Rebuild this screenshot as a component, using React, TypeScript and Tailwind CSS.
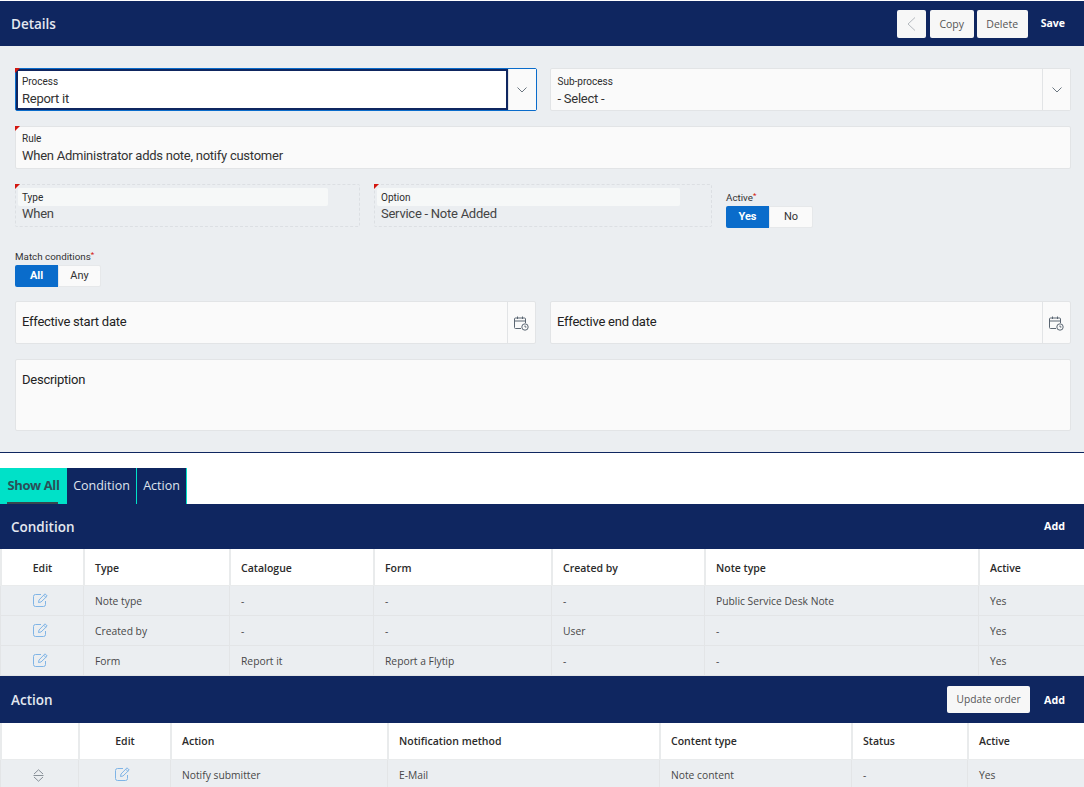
import React from "react";

const navy = "bg-[#0f2660]";

function Corner() {
  return <span className="absolute -left-px -top-px h-0 w-0 border-t-[5px] border-r-[5px] border-t-[#d3160f] border-r-transparent" />;
}

function Chevron() {
  return (
    <svg width="10" height="6" viewBox="0 0 10 6" fill="none" stroke="#6b7680" strokeWidth="1">
      <path d="M0.5 0.5 L5 5 L9.5 0.5" />
    </svg>
  );
}

function CalendarClock() {
  return (
    <svg width="15" height="15" viewBox="0 0 15 15" fill="none" stroke="#5b6672" strokeWidth="1">
      <path d="M7 12.5H1.5a1 1 0 0 1-1-1V3a1 1 0 0 1 1-1h9a1 1 0 0 1 1 1v4" />
      <path d="M0.5 5H11.5M3.5 0.5V3M8.5 0.5V3" />
      <circle cx="11" cy="11" r="3.2" />
      <path d="M11 9.5V11H12.4" />
    </svg>
  );
}

function EditIcon() {
  return (
    <svg className="-ml-[5px] -mt-[3px]" width="15" height="14" viewBox="0 0 15 14" fill="none" stroke="#7fb4e6" strokeWidth="1">
      <path d="M12.5 8v3.5a2 2 0 0 1-2 2H2.5a2 2 0 0 1-2-2V3.5a2 2 0 0 1 2-2H8" />
      <path d="M5.5 9.5 L6 7 L12 0.8 L14.2 3 L8 9 Z" />
      <path d="M10.7 2.2 L12.8 4.3" />
    </svg>
  );
}

function SortIcon() {
  return (
    <svg className="-ml-[4px] -mt-[1px]" width="11" height="13" viewBox="0 0 11 13" fill="none" stroke="#7d858d" strokeWidth="0.9">
      <path d="M1 5 L5.5 0.8 L10 5" />
      <path d="M0.5 6.5H10.5" />
      <path d="M1 8 L5.5 12.2 L10 8" />
    </svg>
  );
}

const bigText = "text-[13px] tracking-[-0.25px]";

function SelectField({ label, value, focused }: { label: string; value: string; focused?: boolean }) {
  return (
    <div className={`relative flex h-[43px] flex-1 rounded-[2px] border bg-[#fafafa] ${focused ? "border-[#0a6ccb]" : "border-[#e2e4e6]"}`}>
      <div className={`flex min-w-0 flex-1 flex-col ${focused ? "border-2 border-[#0f2660] bg-white pt-[4px] pl-[4px]" : "pl-[7px] pt-[6px]"}`}>
        <span className="text-[10px] leading-[14px] text-[#2c2c2c]">{label}</span>
        <span className={`${bigText} leading-[20px] text-[#333]`}>{value}</span>
      </div>
      <div className="flex w-[28px] shrink-0 items-center justify-center border-l border-[#e2e4e6] bg-[#fafafa]">
        <Chevron />
      </div>
      {focused && <Corner />}
    </div>
  );
}

function ReadOnlyField({ label, value, w, labelW }: { label: string; value: string; w: string; labelW: string }) {
  return (
    <div className={`relative h-[43px] ${w} rounded-[2px] border border-dashed border-[#dcdfe3]`}>
      <Corner />
      <div className={`mt-[3px] ml-[2px] h-[18px] ${labelW} rounded-[2px] bg-[#f6f8f8] pl-[4px] text-[10px] leading-[19px] text-[#2c2c2c]`}>{label}</div>
      <div className={`pl-[6px] ${bigText} leading-[16px] text-[#444]`}>{value}</div>
    </div>
  );
}

function Toggle({ a, b, wa, wb }: { a: string; b: string; wa: string; wb: string }) {
  return (
    <div className="flex h-[22px]">
      <div className={`flex ${wa} items-center justify-center rounded-l-[2px] bg-[#0a6ccb] text-[11px] font-bold text-white`}>{a}</div>
      <div className={`flex ${wb} items-center justify-center rounded-r-[2px] border border-[#e6e8ea] bg-[#fafafa] text-[11px] text-[#333]`}>{b}</div>
    </div>
  );
}

function DateField({ label }: { label: string }) {
  return (
    <div className="flex h-[43px] flex-1 rounded-[2px] border border-[#e2e4e6] bg-[#fafafa]">
      <div className={`flex flex-1 items-center pb-[1px] pl-[6px] ${bigText} text-[#222]`}>{label}</div>
      <div className="flex w-[28px] items-center justify-center border-l border-[#e2e4e6] pt-[1px]">
        <CalendarClock />
      </div>
    </div>
  );
}

function Req({ text }: { text: string }) {
  return (
    <div className="h-[15px] text-[9.8px] leading-[13px] text-[#333]">
      {text}
      <span className="relative -top-[3px] text-[8px] text-[#d3160f]">*</span>
    </div>
  );
}

function SmallButton({ children, w }: { children: React.ReactNode; w: string }) {
  return (
    <div className={`flex h-[28px] ${w} items-center justify-center rounded-[2px] bg-[#f7f7f7] pt-[2px] text-[10.5px] text-[#555]`}>{children}</div>
  );
}

function Table({ cols, head, rows, h, headPad }: { cols: string; head: React.ReactNode[]; rows: React.ReactNode[][]; h: string; headPad: string }) {
  return (
    <div className="font-['Open_Sans',sans-serif]">
      <div className={`grid h-[37px] ${cols} bg-white text-[10.5px]`}>
        {head.map((c, i) => (
          <div key={i} className={`flex items-center border-l-2 border-b border-[#e9ebec] pl-[10px] ${headPad} font-semibold text-[#2b2b2b]`}>{c}</div>
        ))}
      </div>
      {rows.map((r, ri) => (
        <div key={ri} className={`grid ${h} ${cols} bg-[#ebeef1] text-[10.3px]`}>
          {r.map((c, i) => (
            <div key={i} className="flex items-center border-l border-b border-[#e3e5e7] pl-[11px] pt-[2px] text-[#484848]">{c}</div>
          ))}
        </div>
      ))}
    </div>
  );
}

function SectionHead({ title, children, h, addClass }: { title: string; children?: React.ReactNode; h: string; addClass?: string }) {
  return (
    <div className={`flex ${h} items-center justify-between ${navy} pl-[11px] pr-[19px] font-['Open_Sans',sans-serif]`}>
      <span className="pt-[2px] text-[13.5px] font-semibold text-[#e4e8f0]">{title}</span>
      <div className="flex items-center gap-[14px]">
        {children}
        <span className={`text-[10.7px] font-bold text-white ${addClass ?? ""}`}>Add</span>
      </div>
    </div>
  );
}

const center = (n: React.ReactNode) => <span className="-ml-[10px] flex w-[calc(100%+10px)] justify-center">{n}</span>;

export default function App() {
  return (
    <div className="h-[787px] w-[1084px] overflow-hidden bg-white font-['Roboto',sans-serif]">
      <div className="pt-[1px]">
        <div className={`flex h-[45px] items-center justify-between ${navy} pl-[11px] pr-[19px]`}>
          <span className="pt-[1px] font-['Open_Sans',sans-serif] text-[13.5px] font-semibold text-[#e4e8f0]">Details</span>
          <div className="flex items-center font-['Open_Sans',sans-serif]">
            <SmallButton w="w-[29px]">
              <svg className="-mt-[2px]" width="9" height="14" viewBox="0 0 9 14" fill="none" stroke="#b4b9be" strokeWidth="1"><path d="M8 0.5 L1 7 L8 13.5" /></svg>
            </SmallButton>
            <div className="ml-[4px]"><SmallButton w="w-[44px]">Copy</SmallButton></div>
            <div className="ml-[3px]"><SmallButton w="w-[51px]">Delete</SmallButton></div>
            <span className="ml-[13px] pt-[1px] text-[10.5px] font-bold text-white">Save</span>
          </div>
        </div>

        <div className="flex h-[406px] flex-col bg-[#ebeef1] pl-[15px] pr-[13px] pt-[22px]">
          <div className="flex gap-[13px]">
            <SelectField label="Process" value="Report it" focused />
            <SelectField label="Sub-process" value="- Select -" />
          </div>
          <div className="relative mt-[15px] h-[43px] rounded-[2px] border border-[#e2e4e6] bg-[#fafafa] pl-[6px] pt-[5px]">
            <Corner />
            <div className="text-[10px] leading-[14px] text-[#2c2c2c]">Rule</div>
            <div className={`${bigText} leading-[20px] text-[#333]`}>When Administrator adds note, notify customer</div>
          </div>
          <div className="mt-[15px] flex">
            <ReadOnlyField label="Type" value="When" w="w-[345px]" labelW="w-[310px]" />
            <div className="w-[14px]" />
            <ReadOnlyField label="Option" value="Service - Note Added" w="w-[338px]" labelW="w-[303px]" />
            <div className="ml-[14px] pt-[7px]">
              <Req text="Active" />
              <Toggle a="Yes" b="No" wa="w-[43px]" wb="w-[44px]" />
            </div>
          </div>
          <div className="mt-[22px]">
            <Req text="Match conditions" />
            <Toggle a="All" b="Any" wa="w-[43px]" wb="w-[43px]" />
          </div>
          <div className="mt-[14px] flex gap-[14px]">
            <DateField label="Effective start date" />
            <DateField label="Effective end date" />
          </div>
          <div className={`mt-[15px] h-[72px] rounded-[2px] border border-[#e2e4e6] bg-[#fafafa] pl-[6px] pt-[11px] ${bigText} leading-[18px] text-[#222]`}>
            Description
          </div>
        </div>
        <div className="h-[1px] bg-[#0f2660]" />

        <div className="h-[15px]" />
        <div className="flex h-[36px] font-['Open_Sans',sans-serif] text-[12.5px]">
          <div className="relative flex w-[67px] items-center justify-center bg-[#00e1c8] text-[13px] font-bold tracking-[-0.4px] text-[#2a5058]">
            Show All
            <span className="absolute bottom-0 left-[7px] h-[2px] w-[51px] bg-[#37474f]" />
          </div>
          <div className={`flex w-[70px] items-center justify-center border-r border-[#00e1c8] ${navy} text-[#dfe4ee]`}>Condition</div>
          <div className={`flex w-[50px] items-center justify-center border-r border-[#00e1c8] ${navy} text-[#dfe4ee]`}>Action</div>
        </div>

        <SectionHead title="Condition" h="h-[45px]" />
        <Table
          cols="grid-cols-[83px_146px_144px_178px_153px_274px_106px]"
          h="h-[30px]"
          headPad="pt-[3px]"
          head={[center("Edit"), "Type", "Catalogue", "Form", "Created by", "Note type", "Active"]}
          rows={[
            [center(<EditIcon />), "Note type", "-", "-", "-", "Public Service Desk Note", "Yes"],
            [center(<EditIcon />), "Created by", "-", "-", "User", "-", "Yes"],
            [center(<EditIcon />), "Form", "Report it", "Report a Flytip", "-", "-", "Yes"],
          ]}
        />

        <SectionHead
          title="Action"
          h="h-[47px]"
          addClass="pt-[2px]"
          children={
            <div className="flex h-[27px] w-[83px] items-center justify-center rounded-[2px] bg-[#f7f7f7] pt-[1px] text-[10.2px] text-[#555]">Update order</div>
          }
        />
        <Table
          cols="grid-cols-[78px_92px_217px_272px_192px_116px_117px]"
          h="h-[30px]"
          headPad="pt-[1px]"
          head={["", center("Edit"), "Action", "Notification method", "Content type", "Status", "Active"]}
          rows={[[center(<SortIcon />), center(<EditIcon />), "Notify submitter", "E-Mail", "Note content", "-", "Yes"]]}
        />
      </div>
    </div>
  );
}
